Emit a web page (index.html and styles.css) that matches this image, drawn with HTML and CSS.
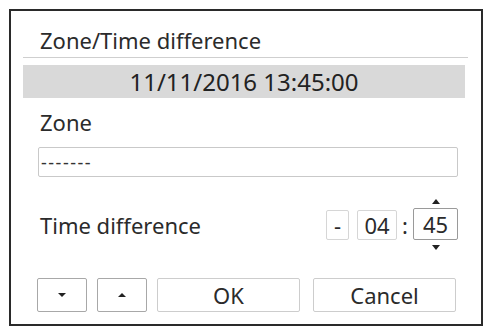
FILE: index.html
```html
<!DOCTYPE html>
<html lang="en">
<head>
  <meta charset="UTF-8" />
  <title>Zone/Time difference</title>
  <link rel="stylesheet" href="styles.css">
</head>
<body>
  <div class="dialog">
    <div class="dialog-title">Zone/Time difference</div>
    <div class="current-date">11/11/2016 13:45:00</div>

    <div class="field-label">Zone</div>
    <div class="zone-input">-------</div>

    <div class="time-row">
      <span class="time-label">Time difference</span>
      <div class="offset">
        <span class="offset-box sign">-</span>
        <span class="offset-box hours">04</span>
        <span class="colon">:</span>
        <span class="offset-box minutes selected">45
          <span class="spin spin-up"></span>
          <span class="spin spin-down"></span>
        </span>
      </div>
    </div>

    <div class="actions">
      <button class="btn btn-arrow"><span class="tri tri-down"></span></button>
      <button class="btn btn-arrow"><span class="tri tri-up"></span></button>
      <button class="btn btn-text">OK</button>
      <button class="btn btn-text">Cancel</button>
    </div>
  </div>
</body>
</html>
```

FILE: styles.css
```css
body, html {
  margin: 0;
  padding: 0;
  background: #fff;
  font-family: "Noto Sans", "Open Sans", sans-serif;
  color: #2b2b2b;
}

.dialog {
  margin: 9px 0 0 9px;
  width: 474px;
  height: 317px;
  box-sizing: border-box;
  border: 2px solid #2a2a2a;
  padding: 0 13px 0 12px;
}

.dialog-title {
  padding: 14px 0 2px 17px;
  font-size: 22px;
  line-height: 30px;
  border-bottom: 1px solid #cfcfcf;
}

.current-date {
  margin: 7px 3px 0 0;
  height: 33px;
  line-height: 33px;
  background-color: #d9d9d9;
  text-align: center;
  font-size: 24px;
  color: #222;
}

.field-label {
  margin-top: 9px;
  padding-left: 17px;
  font-size: 22px;
  line-height: 30px;
}

.zone-input {
  margin: 10px 0 0 15px;
  width: 420px;
  height: 30px;
  box-sizing: border-box;
  border: 1px solid #c9c9c9;
  border-radius: 2px;
  padding-left: 2px;
  font-size: 18px;
  line-height: 28px;
  letter-spacing: 1.5px;
  color: #333;
}

.time-row {
  margin-top: 33px;
  display: flex;
  align-items: center;
  justify-content: space-between;
  height: 30px;
  padding: 0 10px 0 17px;
}

.time-label {
  font-size: 22px;
}

.offset {
  display: flex;
  align-items: center;
  gap: 8px;
}

.offset-box {
  position: relative;
  height: 28px;
  line-height: 28px;
  border: 1px solid #d6d6d6;
  border-radius: 2px;
  text-align: center;
  font-size: 22px;
}

.sign {
  width: 21px;
}

.hours {
  width: 38px;
}

.colon {
  font-size: 22px;
  margin: 0 -3px;
}

.minutes {
  width: 43px;
  height: 30px;
  line-height: 30px;
  margin-top: -2px;
}

.selected {
  border-color: #9a9a9a;
}

.spin {
  position: absolute;
  left: 50%;
  margin-left: -4px;
  width: 0;
  height: 0;
  border-left: 4px solid transparent;
  border-right: 4px solid transparent;
}

.spin-up {
  top: -10px;
  border-bottom: 5px solid #222;
}

.spin-down {
  bottom: -11px;
  border-top: 5px solid #222;
}

.actions {
  margin-top: 38px;
  display: flex;
  gap: 10px;
  padding-left: 14px;
}

.btn {
  height: 34px;
  box-sizing: border-box;
  background: #fff;
  border: 1px solid #cdcdcd;
  border-radius: 2px;
  font-family: inherit;
  font-size: 22px;
  color: #2b2b2b;
  padding: 0;
  display: flex;
  align-items: center;
  justify-content: center;
}

.btn-arrow {
  width: 50px;
  border-color: #a8a8a8;
}

.btn-text {
  width: 143px;
}

.btn-text + .btn-text {
  margin-left: 3px;
}

.tri {
  width: 0;
  height: 0;
  border-left: 4px solid transparent;
  border-right: 4px solid transparent;
}

.tri-down {
  border-top: 4px solid #222;
}

.tri-up {
  border-bottom: 4px solid #222;
}
```
